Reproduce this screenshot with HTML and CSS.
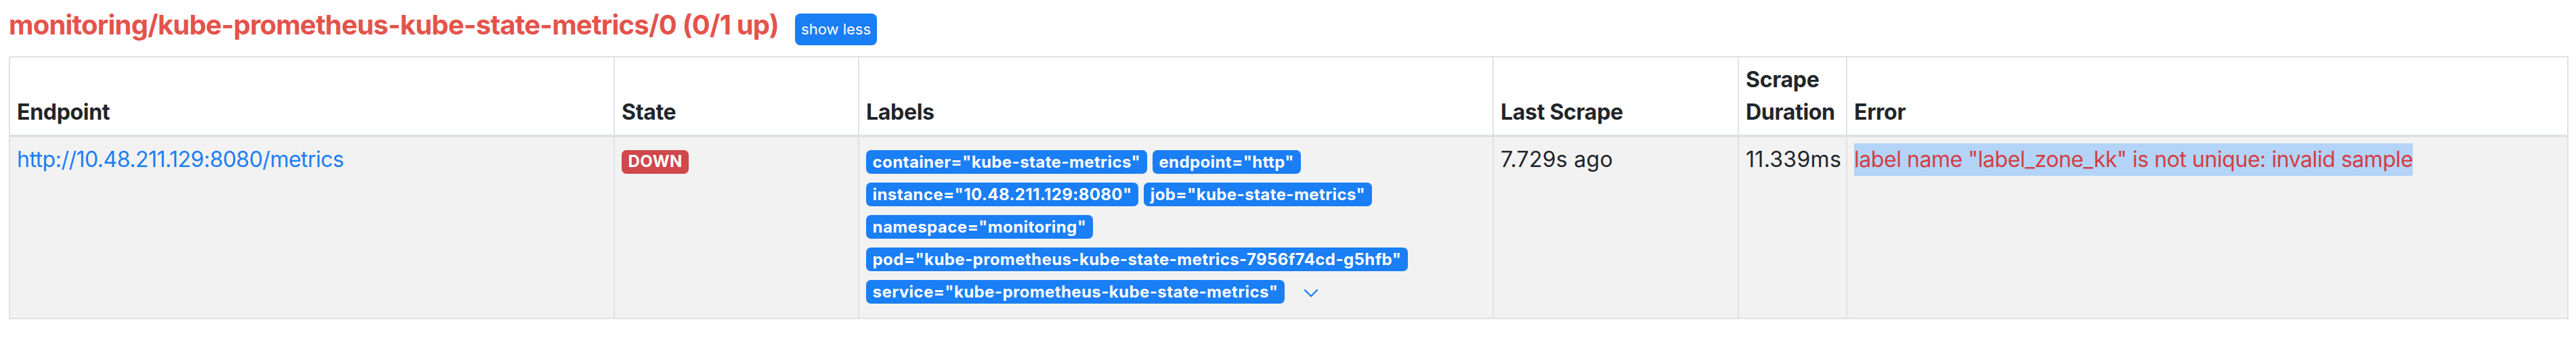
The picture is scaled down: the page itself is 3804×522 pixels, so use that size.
FILE: index.html
```html
<!DOCTYPE html>
<html lang="en">
<head>
<meta charset="utf-8">
<title>Targets</title>
<link rel="stylesheet" href="styles.css">
</head>
<body>
<div class="pool">
  <div class="pool-head">
    <h3 class="pool-title">monitoring/kube-prometheus-kube-state-metrics/0 (0/1 up)</h3>
    <button class="btn-toggle">show less</button>
  </div>
  <table class="targets">
    <colgroup>
      <col class="c-endpoint"><col class="c-state"><col class="c-labels"><col class="c-last"><col class="c-dur"><col class="c-err">
    </colgroup>
    <thead>
      <tr>
        <th>Endpoint</th>
        <th>State</th>
        <th>Labels</th>
        <th>Last Scrape</th>
        <th>Scrape Duration</th>
        <th>Error</th>
      </tr>
    </thead>
    <tbody>
      <tr>
        <td><a class="endpoint" href="#">http://10.48.211.129:8080/metrics</a></td>
        <td><span class="badge badge-down">DOWN</span></td>
        <td>
          <div class="labels"><span class="badge badge-label">container="kube-state-metrics"</span><span class="badge badge-label">endpoint="http"</span><span class="badge badge-label">instance="10.48.211.129:8080"</span><span class="badge badge-label">job="kube-state-metrics"</span><span class="badge badge-label">namespace="monitoring"</span><span class="badge badge-label">pod="kube-prometheus-kube-state-metrics-7956f74cd-g5hfb"</span><span class="badge badge-label">service="kube-prometheus-kube-state-metrics"</span><button class="expand" aria-label="expand"><svg class="chev" viewBox="0 0 22 13" width="22" height="13"><polyline points="2,2 11,11 20,2"/></svg></button></div>
        </td>
        <td class="num">7.729s ago</td>
        <td class="num">11.339ms</td>
        <td><span class="error-text">label name "label_zone_kk" is not unique: invalid sample</span></td>
      </tr>
    </tbody>
  </table>
</div>
</body>
</html>
```

FILE: styles.css
```css
html, body {
  margin: 0;
  background: #ffffff;
}
body {
  font-family: Inter, "Liberation Sans", sans-serif;
  color: #212529;
  font-size: 32px;
  line-height: 48px;
}
.pool {
  padding: 12px 13px 0;
}
.pool-head {
  display: flex;
  align-items: baseline;
  gap: 24px;
  margin-bottom: 16px;
}
.pool-title {
  margin: 0;
  font-size: 40px;
  line-height: 50px;
  font-weight: 700;
  letter-spacing: -0.8px;
  color: #e4534b;
  white-space: nowrap;
}
.btn-toggle {
  font-family: Inter, "Liberation Sans", sans-serif;
  font-size: 22px;
  line-height: 33px;
  padding: 7px 9px;
  border: 0;
  border-radius: 8px;
  background: #1a7ef5;
  color: #ffffff;
}
.targets {
  border-collapse: collapse;
  table-layout: fixed;
  width: 3778px;
}
.c-endpoint { width: 893px; }
.c-state { width: 361px; }
.c-labels { width: 937px; }
.c-last { width: 362px; }
.c-dur { width: 160px; }
.c-err { width: 1065px; }
.targets th,
.targets td {
  border: 2px solid #dee2e6;
  padding: 9px 10px;
  text-align: left;
}
.targets th {
  vertical-align: bottom;
  font-weight: 700;
  letter-spacing: -0.3px;
  border-bottom-width: 4px;
  background: #ffffff;
}
.targets td {
  vertical-align: top;
  background: #f2f2f2;
}
.num {
  letter-spacing: 0.3px;
}
.endpoint {
  color: #1a7ef5;
  text-decoration: none;
  letter-spacing: -0.5px;
}
.badge {
  display: inline-block;
  font-size: 24px;
  font-weight: 700;
  line-height: 24px;
  padding: 5.5px 9.6px;
  border-radius: 7px;
  color: #ffffff;
  white-space: nowrap;
  letter-spacing: 0.4px;
}
.badge-down {
  background: #d0474c;
}
.badge-label {
  background: #1a7ef5;
}
.labels {
  display: flex;
  flex-wrap: wrap;
  align-items: center;
  gap: 13px 8px;
  padding: 10px 0 12px;
}
.expand {
  background: none;
  border: 0;
  padding: 0;
  margin-left: 20px;
  margin-top: 4px;
  display: flex;
}
.chev {
  fill: none;
  stroke: #1a7ef5;
  stroke-width: 2.4;
  stroke-linecap: round;
  stroke-linejoin: round;
}
.error-text {
  display: inline-block;
  line-height: 48px;
  background: #b3d4f7;
  color: #d33c44;
  white-space: nowrap;
  letter-spacing: -0.45px;
}
```
